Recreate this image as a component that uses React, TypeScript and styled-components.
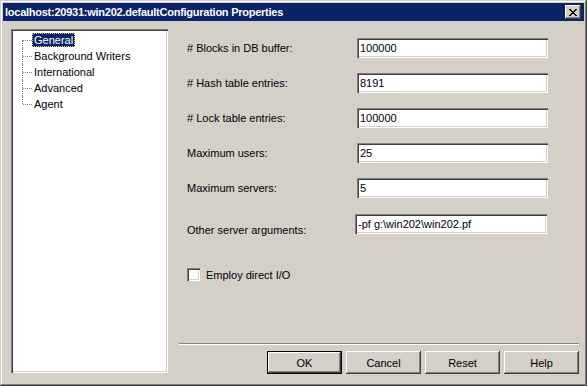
import React from 'react';
import styled, { createGlobalStyle, css } from 'styled-components';

const GlobalStyle = createGlobalStyle`
  html, body {
    margin: 0;
    padding: 0;
    background: #d4d0c8;
  }
  body {
    font-family: 'Liberation Sans', Arial, sans-serif;
    font-size: 11px;
    color: #000;
  }
`;

const sunken = css`
  background: #fff;
  box-shadow: inset 1px 1px #808080, inset 2px 2px #404040,
    inset -1px -1px #fff, inset -2px -2px #d4d0c8;
`;

const raised = css`
  background: #d4d0c8;
  box-shadow: inset -1px -1px #404040, inset 1px 1px #fff,
    inset -2px -2px #808080, inset 2px 2px #d4d0c8;
`;

const Window = styled.div`
  width: 587px;
  height: 386px;
  box-sizing: border-box;
  padding: 3px;
  background: #d4d0c8;
  box-shadow: inset -1px -1px #404040, inset 1px 1px #d4d0c8,
    inset -2px -2px #808080, inset 2px 2px #fff;
  display: flex;
  flex-direction: column;
`;

const TitleBar = styled.div`
  height: 18px;
  background: #0a246a;
  display: flex;
  align-items: center;
  justify-content: space-between;
  padding: 0 3px 0 2px;
`;

const TitleText = styled.span`
  color: #fff;
  font-weight: bold;
  font-size: 11px;
  letter-spacing: -0.25px;
`;

const CloseButton = styled.button`
  ${raised};
  width: 16px;
  height: 14px;
  border: none;
  padding: 0;
  display: flex;
  align-items: center;
  justify-content: center;
`;

const Body = styled.div`
  display: flex;
  gap: 11px;
  padding: 8px 5px 0 8px;
`;

const Tree = styled.div`
  ${sunken};
  width: 157px;
  height: 344px;
  box-sizing: border-box;
  padding: 3px 0 0 11px;
`;

const TreeItem = styled.div`
  display: flex;
  align-items: center;
  height: 16px;
`;

const Connector = styled.span<{ first?: boolean; last?: boolean }>`
  position: relative;
  width: 10px;
  height: 16px;
  flex: none;

  &::before {
    content: '';
    position: absolute;
    left: 0;
    top: ${(p) => (p.first ? '8px' : '0')};
    bottom: ${(p) => (p.last ? '8px' : '0')};
    border-left: 1px dotted #808080;
  }

  &::after {
    content: '';
    position: absolute;
    left: 1px;
    top: 8px;
    width: 9px;
    border-top: 1px dotted #808080;
  }
`;

const TreeLabel = styled.span<{ selected?: boolean }>`
  padding: 1px 2px;
  line-height: 12px;
  ${(p) =>
    p.selected &&
    css`
      background: #0a246a;
      color: #fff;
      outline: 1px dotted #e8c860;
      outline-offset: -1px;
    `}
`;

const RightPane = styled.div`
  width: 400px;
  height: 345px;
  display: flex;
  flex-direction: column;
`;

const Form = styled.div`
  flex: 1;
  padding: 9px 0 0 8px;
  display: flex;
  flex-direction: column;
`;

const FieldRow = styled.div<{ gap: number }>`
  display: flex;
  align-items: center;
  height: 20px;
  margin-bottom: ${(p) => p.gap}px;
`;

const FieldLabel = styled.label<{ drop?: number }>`
  width: 170px;
  flex: none;
  position: relative;
  top: ${(p) => p.drop || 0}px;
`;

const TextBox = styled.input<{ shift?: number; wide?: number }>`
  ${sunken};
  width: ${(p) => p.wide || 191}px;
  height: 20px;
  box-sizing: border-box;
  border: none;
  padding: 0 0 1px 3px;
  margin-left: ${(p) => p.shift || 0}px;
  font-family: 'Liberation Sans', Arial, sans-serif;
  font-size: 11px;
  color: #000;
  outline: none;
`;

const CheckRow = styled.div<{ top: number }>`
  display: flex;
  align-items: center;
  gap: 6px;
  margin-top: ${(p) => p.top}px;
`;

const CheckBox = styled.span`
  ${sunken};
  width: 13px;
  height: 13px;
  display: inline-block;
`;

const Separator = styled.div`
  height: 0;
  border-top: 1px solid #808080;
  border-bottom: 1px solid #fff;
`;

const ButtonRow = styled.div`
  display: flex;
  justify-content: flex-end;
  gap: 4px;
  margin-top: 6px;
`;

const Button = styled.button<{ primary?: boolean }>`
  ${raised};
  width: 75px;
  height: 23px;
  border: none;
  padding: 0;
  font-family: 'Liberation Sans', Arial, sans-serif;
  font-size: 11px;
  color: #000;
  ${(p) =>
    p.primary &&
    css`
      box-shadow: inset 0 0 0 1px #000, inset -2px -2px #404040,
        inset 2px 2px #fff, inset -3px -3px #808080;
    `}
`;

const treeItems = ['General', 'Background Writers', 'International', 'Advanced', 'Agent'];

const fields = [
  { label: '# Blocks in DB buffer:', value: '100000', gap: 15 },
  { label: '# Hash table entries:', value: '8191', gap: 15 },
  { label: '# Lock table entries:', value: '100000', gap: 15 },
  { label: 'Maximum users:', value: '25', gap: 15 },
  { label: 'Maximum servers:', value: '5', gap: 16 },
];

export default function App() {
  return (
    <>
      <GlobalStyle />
      <Window>
        <TitleBar>
          <TitleText>localhost:20931:win202.defaultConfiguration Properties</TitleText>
          <CloseButton aria-label="Close">
            <svg width="8" height="7" viewBox="0 0 8 7" shapeRendering="crispEdges">
              <path
                d="M0 0h2v1H0zM6 0h2v1H6zM1 1h2v1H1zM5 1h2v1H5zM2 2h4v1H2zM3 3h2v1H3zM2 4h4v1H2zM1 5h2v1H1zM5 5h2v1H5zM0 6h2v1H0zM6 6h2v1H6z"
                fill="#000"
              />
            </svg>
          </CloseButton>
        </TitleBar>
        <Body>
          <Tree>
            {treeItems.map((item, i) => (
              <TreeItem key={item}>
                <Connector first={i === 0} last={i === treeItems.length - 1} />
                <TreeLabel selected={i === 0}>{item}</TreeLabel>
              </TreeItem>
            ))}
          </Tree>
          <RightPane>
            <Form>
              {fields.map((f) => (
                <FieldRow key={f.label} gap={f.gap}>
                  <FieldLabel>{f.label}</FieldLabel>
                  <TextBox readOnly defaultValue={f.value} />
                </FieldRow>
              ))}
              <FieldRow gap={0}>
                <FieldLabel drop={6}>Other server arguments:</FieldLabel>
                <TextBox readOnly defaultValue={'-pf g:\\win202\\win202.pf'} shift={-2} wide={192} />
              </FieldRow>
              <CheckRow top={34}>
                <CheckBox />
                <span>Employ direct I/O</span>
              </CheckRow>
            </Form>
            <Separator />
            <ButtonRow>
              <Button primary>OK</Button>
              <Button>Cancel</Button>
              <Button>Reset</Button>
              <Button>Help</Button>
            </ButtonRow>
          </RightPane>
        </Body>
      </Window>
    </>
  );
}
